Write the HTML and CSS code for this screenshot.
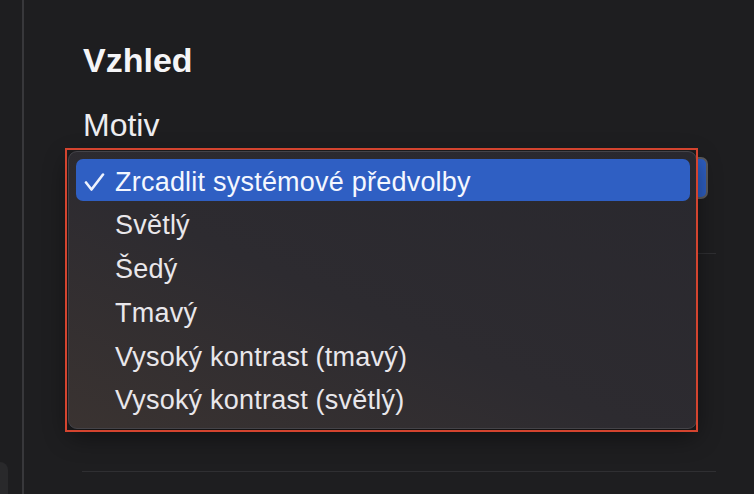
FILE: index.html
```html
<!DOCTYPE html>
<html lang="cs">
<head>
<meta charset="utf-8">
<title>Vzhled</title>
<link rel="stylesheet" href="styles.css">
</head>
<body>
<div class="app">
  <aside class="sidebar">
    <div class="sidebar-item"></div>
  </aside>
  <main class="main">
    <h1 class="title">Vzhled</h1>
    <div class="label">Motiv</div>
    <div class="select"></div>
    <div class="sep sep-top"></div>
    <div class="sep sep-bottom"></div>
  </main>
  <div class="menu">
    <div class="row selected">
      <svg class="check" width="22" height="20" viewBox="0 0 22 20"><path d="M2 9.5 L7.5 16.5 L19 1.5" fill="none" stroke="currentColor" stroke-width="2.6" stroke-linecap="round" stroke-linejoin="round"/></svg>
      <span>Zrcadlit systémové předvolby</span>
    </div>
    <div class="row"><span>Světlý</span></div>
    <div class="row"><span>Šedý</span></div>
    <div class="row"><span>Tmavý</span></div>
    <div class="row"><span>Vysoký kontrast (tmavý)</span></div>
    <div class="row"><span>Vysoký kontrast (světlý)</span></div>
  </div>
  <div class="annotation"></div>
</div>
</body>
</html>
```
FILE: styles.css
```css
* { box-sizing: border-box; }
html, body {
  margin: 0;
  padding: 0;
  background: #1e1e20;
  width: 754px;
  height: 494px;
  overflow: hidden;
  font-family: "Liberation Sans", Arial, sans-serif;
  color: #f2f2f4;
}
.app {
  position: relative;
  display: flex;
  width: 754px;
  height: 494px;
}
.sidebar {
  width: 24px;
  flex: none;
  border-right: 2px solid #38383b;
  background: #1e1e20;
}
.sidebar-item {
  margin-top: 462px;
  width: 8px;
  height: 40px;
  background: #29292b;
  border-top-right-radius: 8px;
}
.main {
  flex: 1;
  padding-left: 59px;
  padding-right: 38px;
}
.title {
  margin: 40px 0 0;
  font-size: 34px;
  line-height: 40px;
  font-weight: 700;
  color: #f5f5f7;
}
.label {
  margin-top: 26px;
  font-size: 32px;
  line-height: 38px;
  color: #ededf0;
}
.select {
  margin-top: 13px;
  margin-right: 8px;
  height: 42px;
  border-radius: 7px;
  background: #2e5fc3;
  border: 2px solid #5c5c60;
}
.sep {
  height: 1px;
  background: #2f2f32;
}
.sep-top { margin-top: 54px; }
.sep-bottom { margin-top: 217px; margin-left: -1px; }
.menu {
  position: absolute;
  left: 68px;
  top: 151px;
  width: 629px;
  height: 278px;
  padding: 7px 6px 7px 7px;
  border-radius: 9px;
  border: 1px solid #444348;
  background: linear-gradient(to top right, #3a3331 0%, #2d2b30 45%, #29282e 100%);
  box-shadow: 0 8px 24px rgba(0,0,0,0.45);
}
.row {
  position: relative;
  display: flex;
  align-items: flex-start;
  height: 42px;
  margin-bottom: 1.8px;
  padding: 2.5px 0 0 39px;
  font-size: 27px;
  line-height: 40px;
  letter-spacing: 0.22px;
  color: #e9e7eb;
  border-radius: 7px;
}
.row.selected {
  background: #2f5fc3;
  color: #f4f7ff;
}
.check {
  position: absolute;
  left: 8px;
  top: 14px;
  color: #eef2fd;
}
.annotation {
  position: absolute;
  left: 65px;
  top: 148px;
  width: 633px;
  height: 284px;
  border: 2px solid #d4442f;
  pointer-events: none;
}
```
